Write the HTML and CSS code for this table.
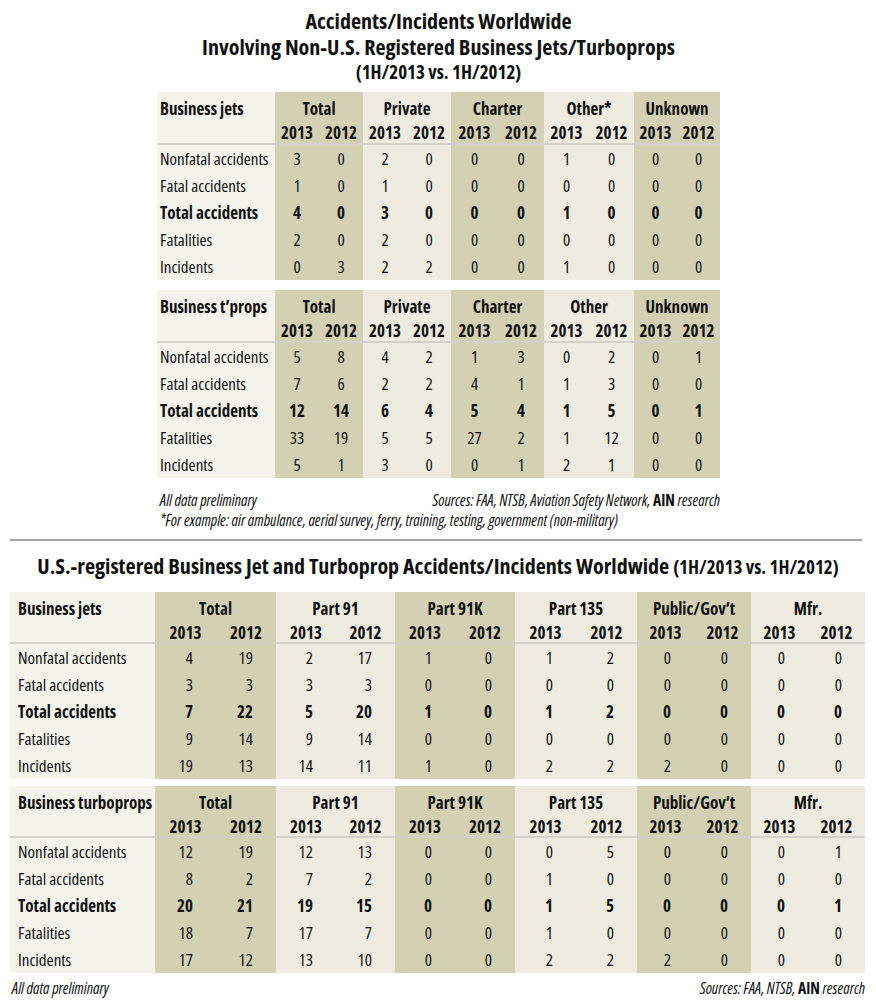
FILE: index.html
```html
<!DOCTYPE html>
<html>
<head>
<meta charset="utf-8">
<link rel="stylesheet" href="styles.css">
</head>
<body>
<div class="page">
  <section class="intl">
    <h1 class="title-top">
      <span class="tl">Accidents/Incidents Worldwide</span>
      <span class="tl">Involving Non-U.S. Registered Business Jets/Turboprops</span>
      <span class="tl sub">(1H/2013 vs. 1H/2012)</span>
    </h1>

    <table class="data small">
      <colgroup>
        <col class="c-lab" style="width:118px">
        <col class="c-dk" style="width:44px"><col class="c-dk" style="width:44px">
        <col class="c-lt" style="width:44px"><col class="c-lt" style="width:44px">
        <col class="c-dk" style="width:47px"><col class="c-dk" style="width:46px">
        <col class="c-lt" style="width:45px"><col class="c-lt" style="width:45px">
        <col class="c-dk" style="width:43px"><col class="c-dk" style="width:43px">
      </colgroup>
      <thead>
        <tr class="h1"><th class="lab">Business jets</th><th colspan="2">Total</th><th colspan="2">Private</th><th colspan="2">Charter</th><th colspan="2">Other*</th><th colspan="2">Unknown</th></tr>
        <tr class="h2"><th class="lab"></th><th>2013</th><th>2012</th><th>2013</th><th>2012</th><th>2013</th><th>2012</th><th>2013</th><th>2012</th><th>2013</th><th>2012</th></tr>
      </thead>
      <tbody>
        <tr><td class="lab">Nonfatal accidents</td><td>3</td><td>0</td><td>2</td><td>0</td><td>0</td><td>0</td><td>1</td><td>0</td><td>0</td><td>0</td></tr>
        <tr><td class="lab">Fatal accidents</td><td>1</td><td>0</td><td>1</td><td>0</td><td>0</td><td>0</td><td>0</td><td>0</td><td>0</td><td>0</td></tr>
        <tr class="tot"><td class="lab">Total accidents</td><td>4</td><td>0</td><td>3</td><td>0</td><td>0</td><td>0</td><td>1</td><td>0</td><td>0</td><td>0</td></tr>
        <tr><td class="lab">Fatalities</td><td>2</td><td>0</td><td>2</td><td>0</td><td>0</td><td>0</td><td>0</td><td>0</td><td>0</td><td>0</td></tr>
        <tr><td class="lab">Incidents</td><td>0</td><td>3</td><td>2</td><td>2</td><td>0</td><td>0</td><td>1</td><td>0</td><td>0</td><td>0</td></tr>
      </tbody>
    </table>

    <table class="data small second">
      <colgroup>
        <col class="c-lab" style="width:118px">
        <col class="c-dk" style="width:44px"><col class="c-dk" style="width:44px">
        <col class="c-lt" style="width:44px"><col class="c-lt" style="width:44px">
        <col class="c-dk" style="width:47px"><col class="c-dk" style="width:46px">
        <col class="c-lt" style="width:45px"><col class="c-lt" style="width:45px">
        <col class="c-dk" style="width:43px"><col class="c-dk" style="width:43px">
      </colgroup>
      <thead>
        <tr class="h1"><th class="lab">Business t’props</th><th colspan="2">Total</th><th colspan="2">Private</th><th colspan="2">Charter</th><th colspan="2">Other</th><th colspan="2">Unknown</th></tr>
        <tr class="h2"><th class="lab"></th><th>2013</th><th>2012</th><th>2013</th><th>2012</th><th>2013</th><th>2012</th><th>2013</th><th>2012</th><th>2013</th><th>2012</th></tr>
      </thead>
      <tbody>
        <tr><td class="lab">Nonfatal accidents</td><td>5</td><td>8</td><td>4</td><td>2</td><td>1</td><td>3</td><td>0</td><td>2</td><td>0</td><td>1</td></tr>
        <tr><td class="lab">Fatal accidents</td><td>7</td><td>6</td><td>2</td><td>2</td><td>4</td><td>1</td><td>1</td><td>3</td><td>0</td><td>0</td></tr>
        <tr class="tot"><td class="lab">Total accidents</td><td>12</td><td>14</td><td>6</td><td>4</td><td>5</td><td>4</td><td>1</td><td>5</td><td>0</td><td>1</td></tr>
        <tr><td class="lab">Fatalities</td><td>33</td><td>19</td><td>5</td><td>5</td><td>27</td><td>2</td><td>1</td><td>12</td><td>0</td><td>0</td></tr>
        <tr><td class="lab">Incidents</td><td>5</td><td>1</td><td>3</td><td>0</td><td>0</td><td>1</td><td>2</td><td>1</td><td>0</td><td>0</td></tr>
      </tbody>
    </table>

    <div class="notes">
      <div class="note-row"><span>All data preliminary</span><span>Sources: FAA, NTSB, Aviation Safety Network, <b>AIN</b> research</span></div>
      <div class="note-row"><span>*For example: air ambulance, aerial survey, ferry, training, testing, government (non-military)</span></div>
    </div>
  </section>

  <hr class="rule">

  <section class="us">
    <h2 class="title-us">U.S.-registered Business Jet and Turboprop Accidents/Incidents Worldwide <span class="paren">(1H/2013 vs. 1H/2012)</span></h2>

    <table class="data wide">
      <colgroup>
        <col class="c-lab" style="width:145px">
        <col class="c-dk" style="width:61px"><col class="c-dk" style="width:60px">
        <col class="c-lt" style="width:60px"><col class="c-lt" style="width:59px">
        <col class="c-dk" style="width:60px"><col class="c-dk" style="width:60px">
        <col class="c-lt" style="width:61px"><col class="c-lt" style="width:61px">
        <col class="c-dk" style="width:57px"><col class="c-dk" style="width:57px">
        <col class="c-lt" style="width:57px"><col class="c-lt" style="width:57px">
      </colgroup>
      <thead>
        <tr class="h1"><th class="lab">Business jets</th><th colspan="2">Total</th><th colspan="2">Part 91</th><th colspan="2">Part 91K</th><th colspan="2">Part 135</th><th colspan="2">Public/Gov’t</th><th colspan="2">Mfr.</th></tr>
        <tr class="h2"><th class="lab"></th><th>2013</th><th>2012</th><th>2013</th><th>2012</th><th>2013</th><th>2012</th><th>2013</th><th>2012</th><th>2013</th><th>2012</th><th>2013</th><th>2012</th></tr>
      </thead>
      <tbody>
        <tr><td class="lab">Nonfatal accidents</td><td>4</td><td>19</td><td>2</td><td>17</td><td>1</td><td>0</td><td>1</td><td>2</td><td>0</td><td>0</td><td>0</td><td>0</td></tr>
        <tr><td class="lab">Fatal accidents</td><td>3</td><td>3</td><td>3</td><td>3</td><td>0</td><td>0</td><td>0</td><td>0</td><td>0</td><td>0</td><td>0</td><td>0</td></tr>
        <tr class="tot"><td class="lab">Total accidents</td><td>7</td><td>22</td><td>5</td><td>20</td><td>1</td><td>0</td><td>1</td><td>2</td><td>0</td><td>0</td><td>0</td><td>0</td></tr>
        <tr><td class="lab">Fatalities</td><td>9</td><td>14</td><td>9</td><td>14</td><td>0</td><td>0</td><td>0</td><td>0</td><td>0</td><td>0</td><td>0</td><td>0</td></tr>
        <tr><td class="lab">Incidents</td><td>19</td><td>13</td><td>14</td><td>11</td><td>1</td><td>0</td><td>2</td><td>2</td><td>2</td><td>0</td><td>0</td><td>0</td></tr>
      </tbody>
    </table>

    <table class="data wide second">
      <colgroup>
        <col class="c-lab" style="width:145px">
        <col class="c-dk" style="width:61px"><col class="c-dk" style="width:60px">
        <col class="c-lt" style="width:60px"><col class="c-lt" style="width:59px">
        <col class="c-dk" style="width:60px"><col class="c-dk" style="width:60px">
        <col class="c-lt" style="width:61px"><col class="c-lt" style="width:61px">
        <col class="c-dk" style="width:57px"><col class="c-dk" style="width:57px">
        <col class="c-lt" style="width:57px"><col class="c-lt" style="width:57px">
      </colgroup>
      <thead>
        <tr class="h1"><th class="lab">Business turboprops</th><th colspan="2">Total</th><th colspan="2">Part 91</th><th colspan="2">Part 91K</th><th colspan="2">Part 135</th><th colspan="2">Public/Gov’t</th><th colspan="2">Mfr.</th></tr>
        <tr class="h2"><th class="lab"></th><th>2013</th><th>2012</th><th>2013</th><th>2012</th><th>2013</th><th>2012</th><th>2013</th><th>2012</th><th>2013</th><th>2012</th><th>2013</th><th>2012</th></tr>
      </thead>
      <tbody>
        <tr><td class="lab">Nonfatal accidents</td><td>12</td><td>19</td><td>12</td><td>13</td><td>0</td><td>0</td><td>0</td><td>5</td><td>0</td><td>0</td><td>0</td><td>1</td></tr>
        <tr><td class="lab">Fatal accidents</td><td>8</td><td>2</td><td>7</td><td>2</td><td>0</td><td>0</td><td>1</td><td>0</td><td>0</td><td>0</td><td>0</td><td>0</td></tr>
        <tr class="tot"><td class="lab">Total accidents</td><td>20</td><td>21</td><td>19</td><td>15</td><td>0</td><td>0</td><td>1</td><td>5</td><td>0</td><td>0</td><td>0</td><td>1</td></tr>
        <tr><td class="lab">Fatalities</td><td>18</td><td>7</td><td>17</td><td>7</td><td>0</td><td>0</td><td>1</td><td>0</td><td>0</td><td>0</td><td>0</td><td>0</td></tr>
        <tr><td class="lab">Incidents</td><td>17</td><td>12</td><td>13</td><td>10</td><td>0</td><td>0</td><td>2</td><td>2</td><td>2</td><td>0</td><td>0</td><td>0</td></tr>
      </tbody>
    </table>

    <div class="notes-us">
      <span>All data preliminary</span><span>Sources: FAA, NTSB, <b>AIN</b> research</span>
    </div>
  </section>
</div>
</body>
</html>
```
FILE: styles.css
```css
* { box-sizing: border-box; }
html, body { margin: 0; padding: 0; background: #ffffff; }
body {
  font-family: "Open Sans", "Liberation Sans", sans-serif;
  font-stretch: 75%;
  color: #111111;
  width: 876px;
  height: 1000px;
  overflow: hidden;
}
.page { width: 876px; }

.intl { width: 563px; margin-left: 157px; }

.title-top {
  margin: 0;
  padding-top: 7px;
  font-size: 22px;
  line-height: 26px;
  font-weight: bold;
  text-align: center;
  display: flex;
  flex-direction: column;
  align-items: center;
  margin-left: -100px;
  margin-right: -100px;
}
.title-top .sub { font-size: 19px; line-height: 24px; margin-top: 1px; }

.data {
  border-collapse: separate;
  border-spacing: 0;
  table-layout: fixed;
}
.data.small { width: 563px; margin-top: 8px; }
.data.small.second { margin-top: 10px; }
.data.wide { width: 855px; margin-left: 10px; margin-top: 12px; }
.data.wide.second { margin-top: 7px; }

.c-lab { background: #f4f3ec; }
.c-lt { background: #eeece1; }
.c-dk { background: #d4d0b3; }

.data th, .data td { padding: 0; white-space: nowrap; overflow: visible; line-height: 18px; }
.data th { font-weight: bold; font-size: 17px; text-align: center; }
.data th.lab, .data td.lab { text-align: left; }

.data .h1 th { height: 29px; vertical-align: middle; padding-top: 4px; }
.data .h2 th { height: 24px; vertical-align: middle; border-bottom: 2px solid #d3d2ca; padding-top: 2px; padding-bottom: 0; }
.data td { height: 27px; font-size: 17px; text-align: center; vertical-align: middle; }
.data .tot td { font-weight: bold; }

.small th.lab, .small td.lab { padding-left: 3px; }

.wide .h1 th { height: 30px; padding-top: 4px; }
.wide .h2 th { height: 22px; padding-top: 1px; }
.wide th.lab, .wide td.lab { padding-left: 8px; }
.wide td { text-align: right; padding-right: 23px; }
.wide td.lab { padding-right: 0; }

.notes { font-size: 15.5px; font-style: italic; line-height: 20px; margin-top: 12px; }
.note-row { display: flex; justify-content: space-between; padding-left: 3px; }
.notes b, .notes-us b { font-style: normal; font-weight: bold; }

.rule {
  border: 0;
  height: 2px;
  background: #a3a3a3;
  margin: 9px 14px 0 10px;
}

.title-us {
  margin: 11px 0 0 0;
  font-size: 22px;
  line-height: 26px;
  font-weight: bold;
  text-align: center;
  white-space: nowrap;
}
.title-us .paren { font-size: 19px; }

.notes-us {
  display: flex;
  justify-content: space-between;
  font-size: 15.5px;
  font-style: italic;
  line-height: 20px;
  margin: 5px 11px 0 12px;
}
```
